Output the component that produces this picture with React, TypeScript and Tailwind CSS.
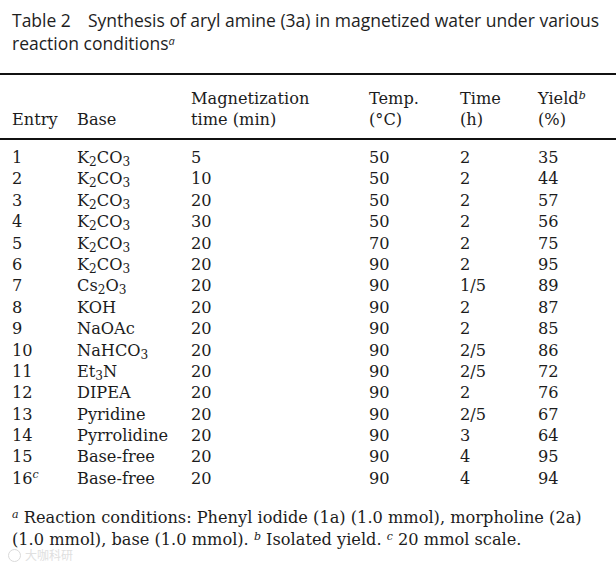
import React from "react";

type Row = {
    entry: React.ReactNode;
    base: React.ReactNode;
    mag: string;
    temp: string;
    time: string;
    yld: string;
};

const K2CO3 = <>K<sub>2</sub>CO<sub>3</sub></>;

const rows: Row[] = [
    { entry: "1", base: K2CO3, mag: "5", temp: "50", time: "2", yld: "35" },
    { entry: "2", base: K2CO3, mag: "10", temp: "50", time: "2", yld: "44" },
    { entry: "3", base: K2CO3, mag: "20", temp: "50", time: "2", yld: "57" },
    { entry: "4", base: K2CO3, mag: "30", temp: "50", time: "2", yld: "56" },
    { entry: "5", base: K2CO3, mag: "20", temp: "70", time: "2", yld: "75" },
    { entry: "6", base: K2CO3, mag: "20", temp: "90", time: "2", yld: "95" },
    { entry: "7", base: <>Cs<sub>2</sub>O<sub>3</sub></>, mag: "20", temp: "90", time: "1/5", yld: "89" },
    { entry: "8", base: "KOH", mag: "20", temp: "90", time: "2", yld: "87" },
    { entry: "9", base: "NaOAc", mag: "20", temp: "90", time: "2", yld: "85" },
    { entry: "10", base: <>NaHCO<sub>3</sub></>, mag: "20", temp: "90", time: "2/5", yld: "86" },
    { entry: "11", base: <>Et<sub>3</sub>N</>, mag: "20", temp: "90", time: "2/5", yld: "72" },
    { entry: "12", base: "DIPEA", mag: "20", temp: "90", time: "2", yld: "76" },
    { entry: "13", base: "Pyridine", mag: "20", temp: "90", time: "2/5", yld: "67" },
    { entry: "14", base: "Pyrrolidine", mag: "20", temp: "90", time: "3", yld: "64" },
    { entry: "15", base: "Base-free", mag: "20", temp: "90", time: "4", yld: "95" },
    { entry: <>16<sup className="italic text-[11px]">c</sup></>, base: "Base-free", mag: "20", temp: "90", time: "4", yld: "94" },
];

export default function App() {
    return (
        <div className="w-[616px] h-[562px] bg-white overflow-hidden relative text-[#1c1c1c]">
            <div className="px-3 pt-[9px] font-['Open_Sans',sans-serif] text-[17.5px] leading-[23px] text-[#1e1e1e]">
                <span>Table 2</span>
                <span className="ml-[17px]">Synthesis of aryl amine (3a) in magnetized water under various reaction conditions</span>
                <sup className="italic text-[11px]">a</sup>
            </div>

            <div className="mt-[18px] font-['DejaVu_Serif',serif] text-[16.2px]">
                <div className="border-t-2 border-[#111]" />
                <div className="grid grid-cols-[65px_114px_178px_91px_78px_1fr] pl-3 pt-[13px] pb-[8px] leading-[21px]">
                    <div className="self-end">Entry</div>
                    <div className="self-end">Base</div>
                    <div>Magnetization<br />time (min)</div>
                    <div>Temp.<br />(°C)</div>
                    <div>Time<br />(h)</div>
                    <div>Yield<sup className="italic text-[11px]">b</sup><br />(%)</div>
                </div>
                <div className="border-t-2 border-[#111]" />
                <div className="pt-[7px]">
                    {rows.map((r, i) => (
                        <div key={i} className="grid grid-cols-[65px_114px_178px_91px_78px_1fr] pl-3 h-[21.4px] leading-[21.4px]">
                            <div>{r.entry}</div>
                            <div>{r.base}</div>
                            <div>{r.mag}</div>
                            <div>{r.temp}</div>
                            <div>{r.time}</div>
                            <div>{r.yld}</div>
                        </div>
                    ))}
                </div>
                <div className="px-3 pt-[18px] leading-[22px]">
                    <sup className="italic text-[11px]">a</sup> Reaction conditions: Phenyl iodide (1a) (1.0 mmol), morpholine (2a) (1.0 mmol), base (1.0 mmol). <sup className="italic text-[11px]">b</sup> Isolated yield. <sup className="italic text-[11px]">c</sup> 20 mmol scale.
                </div>
            </div>

            <div className="absolute left-[8px] top-[546px] flex items-center gap-1 text-[12px] text-[#e0e0e0] font-['Noto_Sans_CJK_SC',sans-serif]">
                <span className="w-[13px] h-[13px] rounded-full border border-[#dadada] inline-block" />
                <span>大咖科研</span>
            </div>
        </div>
    );
}
